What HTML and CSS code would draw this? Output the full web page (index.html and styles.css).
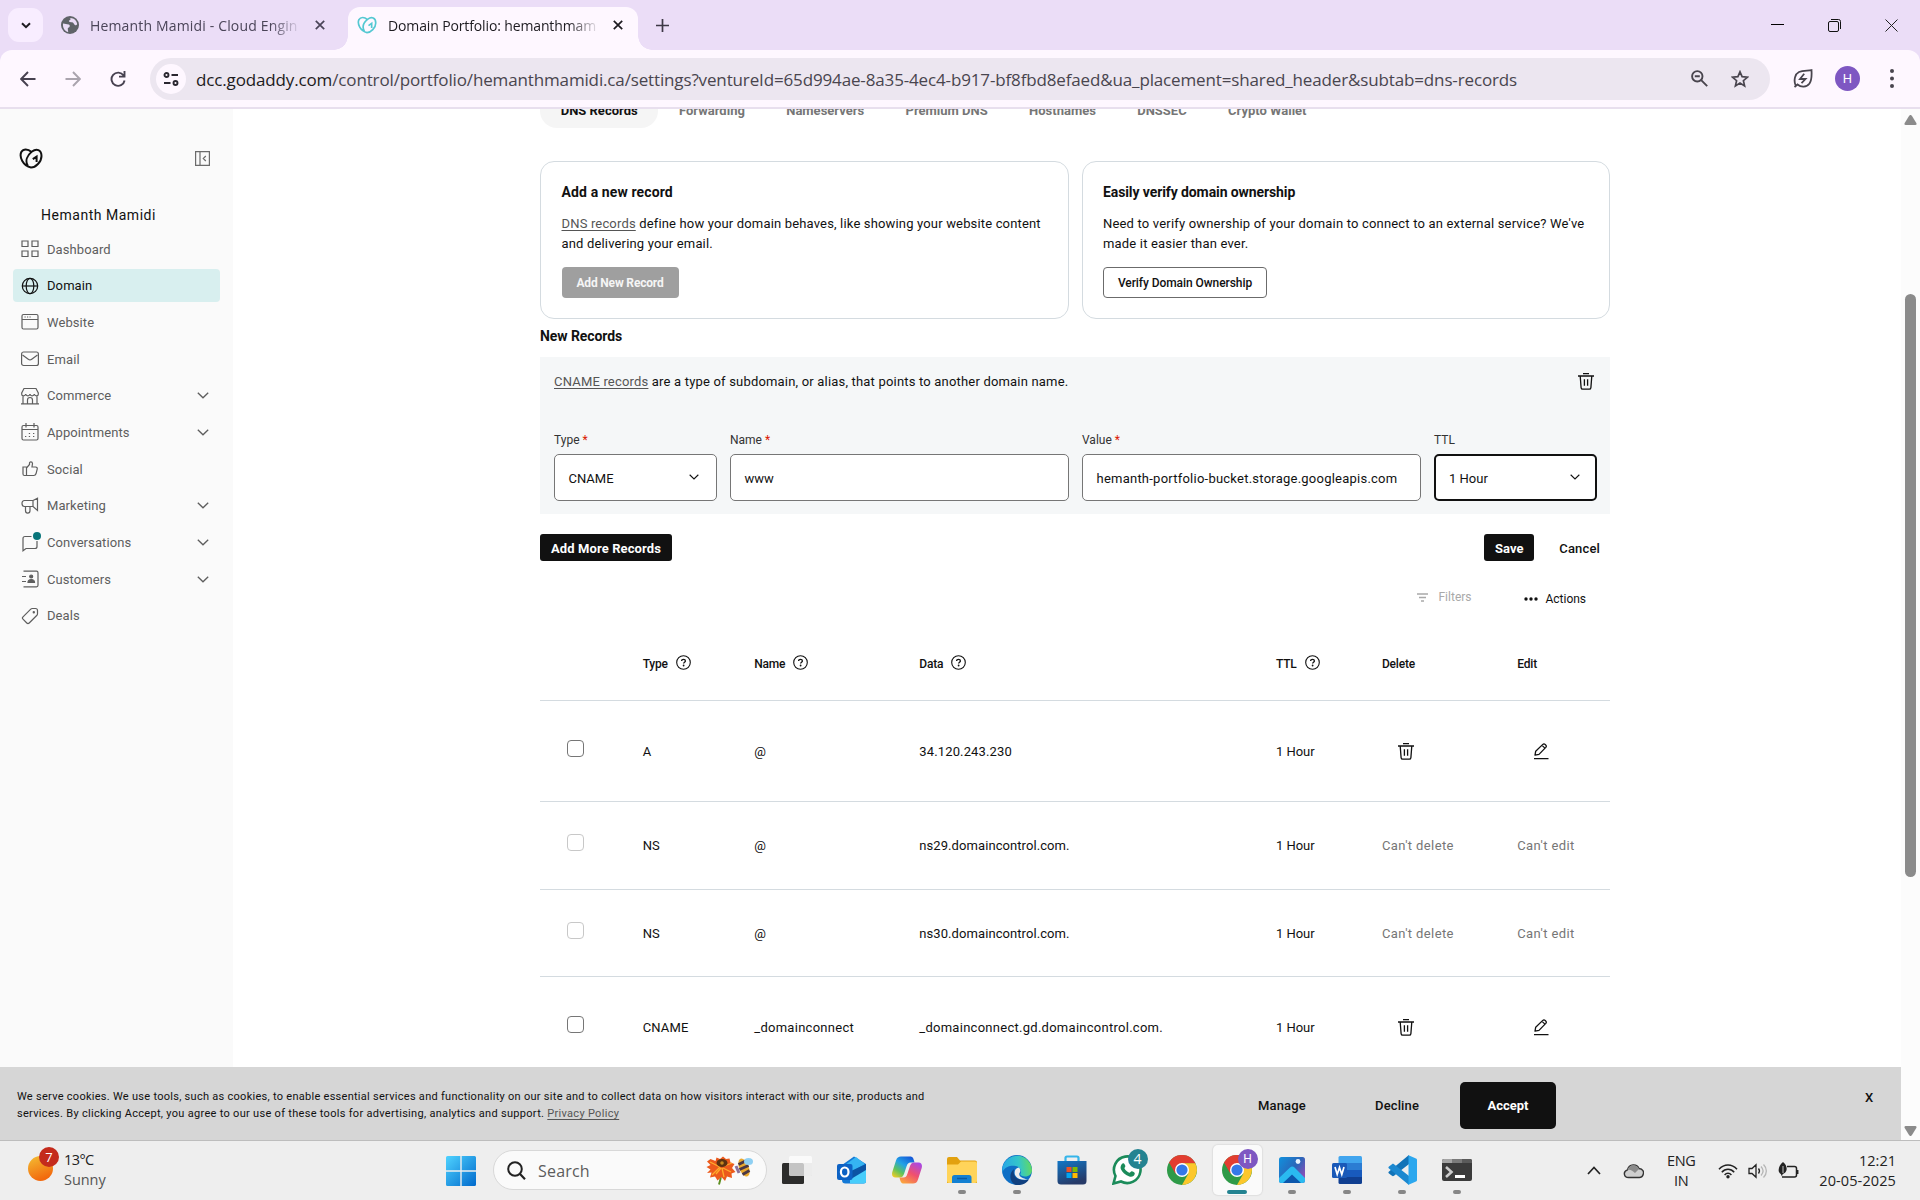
FILE: index.html
```
<!DOCTYPE html>
<html lang="en">
<head>
<meta charset="utf-8">
<title>Domain Portfolio: hemanthmamidi.ca</title>
<link rel="stylesheet" href="styles.css">
</head>
<body>
<!-- shared symbols -->
<svg class="defs" aria-hidden="true">
  <symbol id="chev" viewBox="0 0 12 7"><path d="M.8.8 6 5.8 11.2.8" fill="none" stroke="currentColor" stroke-width="1.3"/></symbol>
  <symbol id="help" viewBox="0 0 15 15"><circle cx="7.5" cy="7.5" r="6.8" fill="none" stroke="currentColor" stroke-width="1.1"/><path d="M5.6 6.1c0-1.1.8-1.8 1.9-1.8s1.9.7 1.9 1.6c0 1.3-1.8 1.3-1.8 2.6" fill="none" stroke="currentColor" stroke-width="1.3"/><circle cx="7.6" cy="10.5" r=".9" fill="currentColor"/></symbol>
  <symbol id="trash" viewBox="0 0 16 17"><path d="M0 3h16M5 .7h6M2.2 3l.9 11.6c.1 1 .7 1.6 1.6 1.6h6.6c.9 0 1.5-.6 1.6-1.6L13.800 3M6.400 6.200v6.600M9.600 6.200v6.600" fill="none" stroke="currentColor" stroke-width="1.3"/></symbol>
  <symbol id="pencil" viewBox="0 0 16 17"><path d="M1 15.700h14.500M2 12.200l.7-4L9.800 1.400c1.500-1.300 4.600 1 3 3L6 11.400zM9 2.400l3.200 3" fill="none" stroke="currentColor" stroke-width="1.3" stroke-linejoin="round"/></symbol>
  <symbol id="go" viewBox="0 0 24 21"><path d="M12.200 3.800C9 .7 4.300.6 2.300 4 0 9 4 18 12 19.600 16.500 19.600 22.500 14 22.500 8 22.500 1.800 17.500 0 13 3.500 8 7.500 6 13 8.800 17.800M17.600 14V8.600l-3.800 2.600" fill="none" stroke="currentColor" stroke-width="2"/></symbol>
  <symbol id="x" viewBox="0 0 10 10"><path d="M.8.8l8.400 8.400M9.200.8.8 9.200" fill="none" stroke="currentColor" stroke-width="1.700"/></symbol>
  <symbol id="chromelogo" viewBox="0 0 30 30"><circle cx="15" cy="15" r="15" fill="#2e9a47"/><path d="M2 7.500A15 15 0 0 1 28 7.500L28.500 8.500H15L8.500 18.800z" fill="#e23d30"/><path d="M28.300 8.200A15 15 0 0 1 15 30l6.300-11.200L15 8.200z" fill="#fcc72b"/><circle cx="15" cy="15" r="7" fill="#fff"/><circle cx="15" cy="15" r="5.600" fill="#3478e8"/></symbol>
</svg>

<header class="browser">
  <div class="tabstrip">
    <div class="tabsearch"><svg width="10" height="7" viewBox="0 0 10 7"><path d="M1 1.200l4 4 4-4" fill="none" stroke="#1d1b20" stroke-width="2"/></svg></div>
    <div class="tab">
      <svg class="fav" width="18" height="18" viewBox="0 0 18 18"><circle cx="9" cy="9" r="9" fill="#5f6368"/><path d="M2 7.500c2.500 0 3.500 1 5.500 1 1.500 0 1.800 2.500.3 3-1.800.5-.6 2.300-.6 4.400C4 15.600 1.500 12 2 7.500zM8.500 2c2 .3 1 2-.3 2.500-1.200.6.500 2.200 2.800 1.700 1.600-.3 2.200 3 3.300 3 1 0 1.600-.5 1.900-1C15.800 4.500 12.500 1.400 8.500 2z" fill="#ebddf7"/></svg>
      <span class="tabtext tabtext-a">Hemanth Mamidi - Cloud Engin</span>
      <svg class="tabx" width="10" height="10"><use href="#x"/></svg>
    </div>
    <div class="tab tab-active">
      <svg class="fav fav-go" width="20" height="18"><use href="#go"/></svg>
      <span class="tabtext">Domain Portfolio: hemanthmam</span>
      <svg class="tabx" width="10" height="10"><use href="#x"/></svg>
    </div>
    <svg class="plus" width="13" height="13" viewBox="0 0 13 13"><path d="M6.500 0v13M0 6.500h13" stroke="#3d3846" stroke-width="1.700"/></svg>
    <div class="winctl">
      <svg width="13" height="13" viewBox="0 0 13 13"><path d="M0 5.500h13" stroke="#000"/></svg>
      <svg width="13" height="13" viewBox="0 0 13 13"><g fill="none" stroke="#111"><rect x=".5" y="2.500" width="10" height="10" rx="1.500"/><path d="M3 .5h7.500a2 2 0 0 1 2 2V10"/></g></svg>
      <svg width="13" height="13" viewBox="0 0 13 13"><path d="M.5.500l12 12M12.500.500l-12 12" stroke="#222"/></svg>
    </div>
  </div>
  <div class="toolbar">
    <div class="nav">
      <svg width="16" height="16" viewBox="0 0 16 16"><path d="M15.500 8H1.500M8 1 1.200 8 8 15" fill="none" stroke="#474150" stroke-width="1.900"/></svg>
      <svg width="16" height="16" viewBox="0 0 16 16"><path d="M.5 8h14M8 1l6.800 7L8 15" fill="none" stroke="#aaa4ae" stroke-width="1.900"/></svg>
      <svg width="16" height="16" viewBox="0 0 16 16"><path d="M13.600 4.500A6.600 6.600 0 1 0 14.600 9.500M14.500 0v5.600H9" fill="none" stroke="#474150" stroke-width="1.900"/></svg>
    </div>
    <div class="omnibox">
      <span class="site"><svg width="16" height="14" viewBox="0 0 16 14"><g fill="none" stroke="#2a2730" stroke-width="1.900"><circle cx="3.500" cy="3" r="2"/><path d="M8.500 3H15M1 11h6.500"/><circle cx="12.500" cy="11" r="2"/></g></svg></span>
      <span class="url"><b>dcc.godaddy.com</b>/control/portfolio/hemanthmamidi.ca/settings?ventureId=65d994ae-8a35-4ec4-b917-bf8fbd8efaed&amp;ua_placement=shared_header&amp;subtab=dns-records</span>
      <svg class="mag" width="17" height="17" viewBox="0 0 17 17"><g fill="none" stroke="#49454e" stroke-width="1.900"><circle cx="6.300" cy="6.300" r="5.200"/><path d="M10.200 10.200l6 6M3.800 6.300h5"/></g></svg>
      <svg class="star" width="18" height="18" viewBox="0 0 18 18"><path d="M9 1.800l2.100 4.900 5.300.5-4 3.500 1.200 5.200L9 13.100l-4.600 2.800 1.200-5.200-4-3.500 5.300-.5z" fill="none" stroke="#49454e" stroke-width="1.700"/></svg>
    </div>
    <svg class="leaf" width="20" height="19" viewBox="0 0 20 19"><path d="M2.500 16C.5 11 2 5 6 3c4-1.800 9-1 12.500-1.800C18.800 6 19 11 16.500 14.500c-3 4-8.500 4-12 1L1.500 18M11.200 4.800 7 10h5.500l-4 4.200" fill="none" stroke="#49454e" stroke-width="1.800"/></svg>
    <span class="avatar">H</span>
    <svg class="dots" width="4" height="19" viewBox="0 0 4 19"><g fill="#49454e"><circle cx="2" cy="2" r="2"/><circle cx="2" cy="9.500" r="2"/><circle cx="2" cy="17" r="2"/></g></svg>
  </div>
</header>

<div class="window">
  <div class="viewport">
    <div class="app">
      <nav class="side">
        <div class="side-top">
          <svg width="24" height="21"><use href="#go"/></svg>
          <svg width="15" height="15" viewBox="0 0 15 15"><path d="M.6.600h13.800v13.800H.6zM5 .6v13.800M10.800 5 8.300 7.500l2.500 2.500" fill="none" stroke="#6b6b6b" stroke-width="1.200"/></svg>
        </div>
        <div class="side-name">Hemanth Mamidi</div>
        <ul class="menu">
          <li><svg class="ic" viewBox="0 0 18 18"><path d="M1 1h6v5.500H1zM11 1h6v5.500h-6zM1 11h6v5.500H1zM11 11h6v5.500h-6z"/></svg>Dashboard</li>
          <li class="on"><svg class="ic" viewBox="0 0 18 18"><circle cx="9" cy="9" r="7.700"/><ellipse cx="9" cy="9" rx="3.800" ry="7.700"/><path d="M1.300 9h15.400"/></svg>Domain</li>
          <li><svg class="ic" viewBox="0 0 18 18"><rect x="1" y="1.500" width="16" height="14.500" rx="1.500"/><path d="M1 6.500h16M3.500 4h1.200M6 4h1.200M8.500 4h1.200"/></svg>Website</li>
          <li><svg class="ic" viewBox="0 0 18 18"><rect x=".6" y="2" width="16.800" height="13.500" rx="2"/><path d="M1.500 5l5.800 4.200c1 .8 2.400.8 3.400 0L16.500 5"/></svg>Email</li>
          <li><svg class="ic" viewBox="0 0 18 18"><path d="M0 16.800h18M2 8.500v8.300M16 8.500v8.300M6.500 16.500v-3.500a2.500 2.500 0 0 1 5 0v3.500M3 1.500h12l2.300 4.500v1.200c0 2.200-3.500 2.200-4 0-.6 2.200-3.800 2.200-4.300 0-.5 2.200-3.700 2.200-4.300 0-.5 2.200-4 2.200-4 0V6z"/></svg>Commerce<svg class="cv"><use href="#chev"/></svg></li>
          <li><svg class="ic" viewBox="0 0 18 18"><rect x="1" y="2.500" width="16" height="14.500" rx="1.500"/><path d="M1 6.500h16M5 0v4.500M13 0v4.500M7.800 10.500h1.300M12 10.500h1.300M4 13.500h1.300M7.800 13.500h1.300M12 13.500h1.300" /></svg>Appointments<svg class="cv"><use href="#chev"/></svg></li>
          <li><svg class="ic" viewBox="0 0 18 18"><path d="M2 7h3.500v8.500H3.500c-1 0-1.500-.6-1.500-1.500zM5.500 8l3-3.500V3c0-1.500 2.800-1.500 3 .5l-.5 3.500h3.500c1.500 0 2 1 1.700 2.200l-1.200 4.600c-.4 1.200-1.200 1.700-2.200 1.700H5.500"/></svg>Social</li>
          <li><svg class="ic" viewBox="0 0 18 18"><path d="M12 3.500H3.500C1.800 3.500 1 4.700 1 6.500s.8 3 2.500 3H12M12 3.500l4.500-2.300v12.300L12 9.500zM4.500 9.500v4c0 3.500 4.500 3.500 4.500 0v-4"/></svg>Marketing<svg class="cv"><use href="#chev"/></svg></li>
          <li><span class="icwrap"><svg class="ic" viewBox="0 0 18 18"><path d="M10.500 2.500H4c-1.200 0-2 .8-2 2v12.200L5 14.500h9c1.200 0 2-.8 2-2V7"/></svg><i class="badge"></i></span>Conversations<svg class="cv"><use href="#chev"/></svg></li>
          <li><svg class="ic" viewBox="0 0 18 18"><path d="M2.500 1.200h13c1 0 1.500.6 1.500 1.500v12.600c0 .9-.5 1.500-1.500 1.500h-13M1 6.500h4M1 11.500h4"/><path d="M7 12.500c0-4 6.500-4 6.500 0z" fill="currentColor"/><circle cx="10.200" cy="6.500" r="1.500" fill="currentColor"/></svg>Customers<svg class="cv"><use href="#chev"/></svg></li>
          <li><svg class="ic" viewBox="0 0 18 18"><path d="M9.500 2.300c.6-.6 1-.8 1.800-.8H14.500c1.200 0 2 .8 2 2v3.200c0 .8-.2 1.200-.8 1.800l-7.500 7.500c-.8.800-1.600.8-2.400 0L2 12.200c-.8-.8-.8-1.600 0-2.400z"/><circle cx="12.800" cy="5.300" r=".6"/></svg>Deals</li>
        </ul>
      </nav>

      <main class="content">
        <div class="subtabs"><span class="sel">DNS Records</span><span>Forwarding</span><span>Nameservers</span><span>Premium DNS</span><span>Hostnames</span><span>DNSSEC</span><span>Crypto Wallet</span></div>
        <div class="cards">
          <section class="card">
            <h3 class="anr">Add a new record</h3>
            <p><a>DNS records</a> define how your domain behaves, like showing your website content<br>and delivering your email.</p>
            <button class="btn-off">Add New Record</button>
          </section>
          <section class="card">
            <h3>Easily verify domain ownership</h3>
            <p class="need">Need to verify ownership of your domain to connect to an external service? We've<br>made it easier than ever.</p>
            <button class="btn-line">Verify Domain Ownership</button>
          </section>
        </div>
        <h2>New Records</h2>
        <section class="panel">
          <div class="panel-top"><p><a>CNAME records</a> are a type of subdomain, or alias, that points to another domain name.</p><svg width="16" height="17"><use href="#trash"/></svg></div>
          <div class="fields">
            <div><label>Type <em>*</em></label><div class="box">CNAME<svg width="10" height="6"><use href="#chev"/></svg></div></div>
            <div><label>Name <em>*</em></label><div class="box">www</div></div>
            <div><label>Value <em>*</em></label><div class="box val">hemanth-portfolio-bucket.storage.googleapis.com</div></div>
            <div><label>TTL</label><div class="box focus">1 Hour<svg width="10" height="6"><use href="#chev"/></svg></div></div>
          </div>
        </section>
        <div class="acts"><button class="btn-dark">Add More Records</button><span class="grow"></span><button class="btn-dark save">Save</button><span class="cancel">Cancel</span></div>
        <div class="tools">
          <span class="filters"><svg width="11" height="9" viewBox="0 0 11 9"><path d="M0 1h11M2 4.500h7M4 8h3" stroke="currentColor" stroke-width="1.400"/></svg>Filters</span>
          <span class="more"><svg width="14" height="4" viewBox="0 0 14 4"><g fill="#111"><circle cx="2" cy="2" r="1.700"/><circle cx="7" cy="2" r="1.700"/><circle cx="12" cy="2" r="1.700"/></g></svg>Actions</span>
        </div>
        <div class="table">
          <div class="row head"><span></span><span>Type<svg width="15" height="15"><use href="#help"/></svg></span><span>Name<svg width="15" height="15"><use href="#help"/></svg></span><span>Data<svg width="15" height="15"><use href="#help"/></svg></span><span>TTL<svg width="15" height="15"><use href="#help"/></svg></span><span>Delete</span><span>Edit</span></div>
          <div class="row tall"><i class="check"></i><span>A</span><span>@</span><span>34.120.243.230</span><span class="hr">1 Hour</span><svg class="act" width="16" height="17"><use href="#trash"/></svg><svg class="act" width="16" height="17"><use href="#pencil"/></svg></div>
          <div class="row"><i class="check dim"></i><span>NS</span><span>@</span><span class="ns">ns29.domaincontrol.com.</span><span class="hr">1 Hour</span><span class="no">Can't delete</span><span class="no">Can't edit</span></div>
          <div class="row short"><i class="check dim"></i><span>NS</span><span>@</span><span class="ns">ns30.domaincontrol.com.</span><span class="hr">1 Hour</span><span class="no">Can't delete</span><span class="no">Can't edit</span></div>
          <div class="row tall"><i class="check"></i><span>CNAME</span><span class="dc">_domainconnect</span><span class="dc">_domainconnect.gd.domaincontrol.com.</span><span class="hr">1 Hour</span><svg class="act" width="16" height="17"><use href="#trash"/></svg><svg class="act" width="16" height="17"><use href="#pencil"/></svg></div>
        </div>
      </main>
    </div>

    <div class="cookie">
      <p>We serve cookies. We use tools, such as cookies, to enable essential services and functionality on our site and to collect data on how visitors interact with our site, products and<br><span class="l2">services. By clicking Accept, you agree to our use of these tools for advertising, analytics and support. <a>Privacy Policy</a></span></p>
      <span class="manage">Manage</span><span class="decline">Decline</span><button class="accept">Accept</button><span class="cx">X</span>
    </div>
  </div>
  <div class="scroll">
    <svg width="13" height="10" viewBox="0 0 13 10"><path d="M6.500 0c.8 0 1.300.7 1.800 1.500l4 6.500c.6 1 .2 2-1 2H1.700c-1.200 0-1.600-1-1-2l4-6.500C5.200.7 5.700 0 6.500 0z" fill="#8b8b8b"/></svg>
    <div class="thumb"></div>
    <svg width="13" height="10" viewBox="0 0 13 10"><path d="M6.500 10c.8 0 1.300-.7 1.800-1.500l4-6.500c.6-1 .2-2-1-2H1.700C.5 0 .1 1 .7 2l4 6.500c.5.800 1 1.500 1.800 1.500z" fill="#8b8b8b"/></svg>
  </div>
</div>

<footer class="taskbar">
  <div class="weather">
    <span class="sun"><svg width="25" height="25" viewBox="0 0 25 25"><defs><linearGradient id="sg" x1="0" y1="0" x2=".4" y2="1"><stop offset="0" stop-color="#f3bf34"/><stop offset="1" stop-color="#f2690d"/></linearGradient></defs><circle cx="12.500" cy="12.500" r="12.500" fill="url(#sg)"/></svg><b>7</b></span>
    <span class="wtext">13°C<br><i>Sunny</i></span>
  </div>
  <svg class="start" width="30" height="30" viewBox="0 0 30 30"><defs><linearGradient id="wg" x1="0" y1="0" x2="1" y2="1"><stop offset="0" stop-color="#4fd3ff"/><stop offset="1" stop-color="#0069cc"/></linearGradient></defs><path d="M0 1.500A1.500 1.500 0 0 1 1.500 0H14.300v14.300H0zM15.700 0h12.800A1.500 1.500 0 0 1 30 1.500v12.800H15.700zM0 15.700h14.300V30H1.500A1.500 1.500 0 0 1 0 28.500zM15.700 15.700H30v12.800a1.500 1.500 0 0 1-1.500 1.500H15.700z" fill="url(#wg)"/></svg>
  <div class="search">
    <svg width="19" height="19" viewBox="0 0 19 19"><circle cx="8" cy="8" r="6.800" fill="none" stroke="#222" stroke-width="2"/><path d="M12.800 12.800l5.200 5.400" stroke="#222" stroke-width="2.200"/></svg>
    <span>Search</span>
    <svg class="bug" width="48" height="30" viewBox="0 0 48 30"><path d="M15 18q0 6-2 11.500" stroke="#5d8f22" stroke-width="2" fill="none"/><path d="M1 6.500 4.500 4l5 2 1-3.500L14 4l3-2.500 3 2.500 3.500-.5 1 4 4 1.500-2.500 4 3.500 4-4 1.500.5 4.500-5-1.500-2 4.500-3.500-4-4 3.500-2.500-4-5 1 1.500-5L1 18l3.500-3.500L.5 12l4-2z" fill="#ec5a1c"/><path d="M4 7l10 5M6 20l8-8M18 22l-2-9M25 17l-8-4M26 8l-8 3M10 19l5-6" stroke="#ffab2c" stroke-width="1.300"/><ellipse cx="16" cy="8" rx="5.500" ry="4" fill="#5c3211"/><circle cx="16" cy="8" r="1.800" fill="#c98a1d"/><ellipse cx="38" cy="12.500" rx="4.800" ry="9.500" transform="rotate(-22 38 12.500)" fill="#e9a92e"/><path d="M32.500 9.500l8-4M33.500 14.500l9-4M36.500 19.500l7-4" stroke="#493846" stroke-width="3"/><ellipse cx="42.500" cy="6.500" rx="4.500" ry="3.500" fill="#8fd0f3"/><path d="M30 11l3 7" stroke="#8a719a" stroke-width="3"/></svg>
  </div>
  <div class="apps">
    <span class="app-i"><svg width="30" height="30" viewBox="0 0 30 30"><rect y="8" width="22" height="21" rx="1.500" fill="#2c2c2b"/><rect x="7" y="1" width="23" height="20" rx="1.500" fill="#fff" fill-opacity=".72"/><path d="M22 8h8v13h-8z" fill="#d8d8d8" opacity=".4"/></svg></span>
    <span class="app-i"><svg width="30" height="30" viewBox="0 0 30 30"><path d="M5 10 17 1.500 29 9v17a2.500 2.500 0 0 1-2.500 2.500h-18A3.500 3.500 0 0 1 5 25z" fill="#1479d6"/><path d="M8 10 19 2l9 7-14 8z" fill="#35b4f2"/><path d="M29 10 13 19v9.500h13.500A2.500 2.500 0 0 0 29 26z" fill="#47cdfb"/><path d="M29 9v6L14 24v-8z" fill="#0b54a4"/><rect y="9" width="15.500" height="16" rx="2" fill="#0d62c4"/><ellipse cx="7.700" cy="17" rx="3.800" ry="4.500" fill="none" stroke="#fff" stroke-width="2.200"/></svg></span>
    <span class="app-i"><svg width="30" height="30" viewBox="0 0 30 30"><defs><linearGradient id="c1" x1=".8" y1="0" x2=".1" y2="1"><stop offset="0" stop-color="#1458d8"/><stop offset=".4" stop-color="#23a2e6"/><stop offset=".7" stop-color="#5ec35c"/><stop offset="1" stop-color="#f4cb23"/></linearGradient><linearGradient id="c2" x1=".8" y1="0" x2=".2" y2="1"><stop offset="0" stop-color="#a948e4"/><stop offset=".5" stop-color="#f0506e"/><stop offset="1" stop-color="#fba53d"/></linearGradient></defs><path d="M9 1.500h9c3 0 3.500 2 4.500 6h-4c-2 0-3 1-4 4L12 19c-1 2.500-2 3.500-4.500 3.500H3.500C.5 22.500-.5 20 .3 17L4 5.500C5 2.500 6.500 1.500 9 1.500z" fill="url(#c1)"/><path d="M21 28.500h-9c-3 0-3.500-2-4.500-6h4c2 0 3-1 4-4L18 11c1-2.500 2-3.500 4.500-3.500h4c3 0 4 2.500 3.200 5.500L26 24.500c-1 3-2.500 4-5 4z" fill="url(#c2)"/></svg></span>
    <span class="app-i run"><svg width="30" height="30" viewBox="0 0 30 30"><path d="M0 4a2 2 0 0 1 2-2h8l3 3.500H28a2 2 0 0 1 2 2V28H0z" fill="#e2a10f"/><path d="M0 9.500h11l3-3h14a2 2 0 0 1 2 2V26a2 2 0 0 1-2 2H2a2 2 0 0 1-2-2z" fill="#ffd45a"/><path d="M5 28v-5.500a2.500 2.500 0 0 1 2.500-2.500H22a2.500 2.500 0 0 1 2.500 2.500V28z" fill="#1380d2"/><path d="M10 23.500h10" stroke="#0a5aa3" stroke-width="1.500"/></svg></span>
    <span class="app-i run"><svg width="30" height="30" viewBox="0 0 30 30"><defs><linearGradient id="e1" x1="0" y1=".3" x2="1" y2=".2"><stop offset="0" stop-color="#28a8e6"/><stop offset=".55" stop-color="#34c6c9"/><stop offset="1" stop-color="#66db57"/></linearGradient></defs><circle cx="15" cy="15" r="15" fill="#0f6fc5"/><path d="M.5 12A15 15 0 0 1 30 15c0 4-3 6.500-7 6.500-3 0-5.500-1-4.500-3 1.500-3.500-1-7-5-7.500C8 10.300 3 12 .3 17z" fill="url(#e1)"/><path d="M12 14c-2 8 5 13 15 10.500C24 29 19 30.500 14 30 8 28 6 19 12 14z" fill="#10407f"/><path d="M17.500 18c1.500-2 .8-4-.5-5.500-4 .5-5 4-4 7.500 2 4 8 6 14.500 4-1 1-12-1-10-6z" fill="#eee"/></svg></span>
    <span class="app-i"><svg width="30" height="30" viewBox="0 0 30 30"><defs><linearGradient id="st" x1="0" y1="0" x2=".4" y2="1"><stop offset="0" stop-color="#1277c6"/><stop offset="1" stop-color="#263a68"/></linearGradient></defs><path d="M8.500 7V3A1.500 1.500 0 0 1 10 1.500h10A1.500 1.500 0 0 1 21.500 3v4" fill="none" stroke="#35b5ea" stroke-width="2.200"/><path d="M.5 6h29v20a3.500 3.500 0 0 1-3.500 3.500H4A3.500 3.500 0 0 1 .5 26z" fill="url(#st)"/><path d="M9.500 12h5v5h-5z" fill="#f05023"/><path d="M15.500 12h5v5h-5z" fill="#80ba00"/><path d="M9.500 18h5v5h-5z" fill="#02a5ef"/><path d="M15.500 18h5v5h-5z" fill="#ffb902"/></svg></span>
    <span class="app-i"><svg width="30" height="30" viewBox="0 0 30 30"><path d="M1.500 28.500l2-7.500A13.300 13.300 0 1 1 9 26.500z" fill="#fff" stroke="#1b8b5a" stroke-width="2.600"/><path d="M10.500 8.500c1.500-1 2 .3 2.800 2.200.5 1.200-1.300 2-.8 2.800 1.200 2 2.800 3.400 4.800 4.200.9.300 1.600-1.700 2.500-1.500 1 .3 3.200 1 3 2.300-.4 3-3.200 3.600-5.500 2.900-4.700-1.500-7-4.200-8.500-7.400-.7-1.900.2-4.300 1.700-5.500z" fill="#1b8b5a"/></svg><b class="cnt">4</b></span>
    <span class="app-i"><svg width="30" height="30"><use href="#chromelogo"/></svg></span>
    <span class="app-i cur"><svg width="30" height="30"><use href="#chromelogo"/></svg><b class="cnt prof">H</b></span>
    <span class="app-i run"><svg width="30" height="30" viewBox="0 0 30 30"><defs><linearGradient id="ph" x1="0" y1="0" x2="1" y2=".7"><stop offset="0" stop-color="#1191dd"/><stop offset=".6" stop-color="#2b65b8"/><stop offset="1" stop-color="#8d4eb8"/></linearGradient></defs><rect x="2" y="2" width="26" height="26" rx="2.500" fill="url(#ph)"/><path d="M2 23 13 12.500c1.500-1.500 3-1.500 4.500 0L28 23v2.500a2.500 2.500 0 0 1-2.500 2.500h-21A2.500 2.500 0 0 1 2 25.500z" fill="#2abaf0"/><path d="M6 28l9-8.500 9 8.500z" fill="#0d57ac"/><circle cx="21" cy="6.500" r="2.400" fill="#e8f4ff"/></svg></span>
    <span class="app-i run"><svg width="30" height="30" viewBox="0 0 30 30"><path d="M6.500 2.500A1.500 1.500 0 0 1 8 1h20.500A1.500 1.500 0 0 1 30 2.500V8H6.500z" fill="#41a5ee"/><path d="M6.500 8H30v7H6.500z" fill="#2b7cd3"/><path d="M6.500 15H30v7H6.500z" fill="#185abd"/><path d="M6.500 22H30v5.500a1.500 1.500 0 0 1-1.500 1.500H8a1.500 1.500 0 0 1-1.500-1.500z" fill="#103f91"/><rect y="8" width="15" height="15" rx="1.500" fill="#1a59b8"/><path d="M3 12l2.200 7.500L7.500 12.500l2.300 7L12 12" fill="none" stroke="#fff" stroke-width="1.700"/></svg></span>
    <span class="app-i run"><svg width="30" height="30" viewBox="0 0 30 30"><path d="M22 0v9L7 20.800c-.8.5-1.400.5-2 0l-3-2.300c-.8-.7-.8-1.200 0-2L21 .8z" fill="#1173b8"/><path d="M22 30v-9L7 9.200c-.8-.5-1.400-.5-2 0l-3 2.300c-.8.7-.8 1.200 0 2L21 29.200z" fill="#1b88d0"/><path d="M21.500.2 29 3.500c.7.300 1 .8 1 1.500v20c0 .7-.3 1.200-1 1.500l-7.500 3.300z" fill="#2ba7ee"/></svg></span>
    <span class="app-i run"><svg width="30" height="30" viewBox="0 0 30 30"><rect y="4" width="30" height="22" rx="2" fill="#3b3b3b"/><path d="M0 8V6a2 2 0 0 1 2-2h8v4z" fill="#a5a5a5"/><path d="M10 4h10v4H10z" fill="#7a7a7a"/><path d="M20 4h8a2 2 0 0 1 2 2v2H20z" fill="#5a5a5a"/><path d="M4 12l5.500 5L4 22" fill="none" stroke="#ccc" stroke-width="2.600"/><path d="M13 21.500h10" stroke="#fff" stroke-width="3"/></svg></span>
  </div>
  <div class="tray">
    <svg width="14" height="9" viewBox="0 0 14 9"><path d="M1 8l6-6.500L13 8" fill="none" stroke="#222" stroke-width="1.700"/></svg>
    <svg class="cloud" width="21" height="16" viewBox="0 0 21 16"><path d="M5.500 14.500C1 14.500-.5 8.500 4.500 6.800 6 .5 14 .5 16 5.500c4 .3 5 3.500 4.300 5.500-.5 2.200-2 3.500-4 3.500z" fill="#cfcfcf" stroke="#333" stroke-width="1.400"/><path d="M4.500 7C7 6 9.500 7.500 12 10l4-4c-2-5-9.500-5-11.500 1z" fill="#8b8b8b"/></svg>
    <span class="lang">ENG<br>IN</span>
    <svg class="wifi" width="20" height="16" viewBox="0 0 20 16"><g fill="none" stroke="#222" stroke-width="1.500"><path d="M1 6.200c5-5.700 13-5.700 18 0M3.800 9.200c3.500-4 8.900-4 12.400 0M6.600 12c2-2.200 4.800-2.200 6.800 0"/></g><circle cx="10" cy="13.800" r="1.700" fill="#222"/></svg>
    <svg class="vol" width="20" height="16" viewBox="0 0 20 16"><path d="M1 5.500h3l4-3.800v12.600l-4-3.800H1zM10.500 5.500c1.200 1.500 1.200 3.500 0 5" fill="none" stroke="#222" stroke-width="1.300"/><path d="M13 3.500c2.500 2.700 2.500 6.300 0 9M15.500 1.500c3.800 3.800 3.800 9.200 0 13" fill="none" stroke="#b5b5b5" stroke-width="1.300"/></svg>
    <svg class="bat" width="21" height="18" viewBox="0 0 21 18"><path d="M9 4.500h7.500a2 2 0 0 1 2 2v6.500a2 2 0 0 1-2 2H4M19.700 8v4" fill="none" stroke="#222" stroke-width="1.500"/><path d="M5 0c4.500 3 5 10 .8 11.500-1.300.4-1.600 1.500-1.800 3L2.800 12C-1 10 .5 3.500 5 0z" fill="#222"/><path d="M5 4v7" stroke="#eee" stroke-width=".8"/></svg>
    <span class="clock">12:21<br><i>20-05-2025</i></span>
  </div>
</footer>
</body>
</html>
```
FILE: styles.css
```
* { box-sizing: border-box; }
body { margin: 0; width: 1920px; height: 1200px; overflow: hidden; display: flex; flex-direction: column; background: #fff; color: #111; font: 13px Roboto, "Liberation Sans", sans-serif; }
h2, h3, p, ul { margin: 0; padding: 0; font-weight: inherit; font-size: inherit; }
i, em { font-style: normal; }
svg { display: block; flex: none; }
button { border: 0; padding: 0; font: inherit; display: flex; align-items: center; justify-content: center; }
.defs { width: 0; height: 0; position: absolute; }

/* browser frame */
.browser { height: 109px; flex: none; background: #ebddf7; font-family: "Open Sans", "Noto Sans", sans-serif; }
.tabstrip { height: 50px; display: flex; align-items: center; padding-left: 8px; }
.tabsearch { width: 35px; height: 34px; border-radius: 11px; background: #f8edff; display: flex; align-items: center; justify-content: center; }
.tab { height: 43px; align-self: flex-end; display: flex; align-items: center; width: 290px; padding: 0 15px 7px 9px; font-size: 14px; color: #4a4458; }
.tab:not(.tab-active) { margin-left: 9px; width: 296px; padding-right: 23px; }
.tab-active { background: #fef7ff; border-radius: 12px 12px 0 0; color: #1d1b20; position: relative; }
.tab-active::before, .tab-active::after { content: ""; position: absolute; bottom: 0; width: 14px; height: 14px; }
.tab-active::before { left: -14px; background: radial-gradient(circle at 0 0, transparent 13.5px, #fef7ff 14px); }
.tab-active::after { right: -14px; background: radial-gradient(circle at 100% 0, transparent 13.5px, #fef7ff 14px); }
.fav { margin-right: 11px; }
.fav-go { color: #54c8d2; }
.tabtext { width: 212px; white-space: nowrap; letter-spacing: -0.13px; -webkit-mask-image: linear-gradient(90deg, #000 180px, transparent 212px); mask-image: linear-gradient(90deg, #000 180px, transparent 212px); }
.tabtext-a { letter-spacing: 0.16px; }
.tabx { margin-left: auto; }
.plus { margin-left: 18px; }
.winctl { margin-left: auto; display: flex; gap: 44px; padding-right: 22px; }
.toolbar { height: 59px; background: #fef7ff; border-radius: 12px 12px 0 0; border-bottom: 2px solid #e8dfee; display: flex; align-items: center; }
.nav { display: flex; gap: 29px; padding-left: 20px; width: 150px; }
.omnibox { width: 1620px; height: 42px; border-radius: 21px; background: #ece6f0; display: flex; align-items: center; padding-left: 6px; }
.site { width: 30px; height: 30px; border-radius: 50%; background: #fef7ff; display: flex; align-items: center; justify-content: center; }
.url { margin: 1px 0 0 10px; font-size: 17px; letter-spacing: -0.143px; color: #49454e; white-space: nowrap; }
.url b { font-weight: 400; color: #1d1b20; }
.mag { margin-left: auto; }
.star { margin: 0 21px 0 23px; }
.leaf { margin-left: 23px; }
.avatar { margin-left: 22px; width: 25px; height: 25px; border-radius: 50%; background: #7e57c2; color: #fff; font: 13px Roboto, sans-serif; display: flex; align-items: center; justify-content: center; }
.dots { margin-left: 30px; }

/* page */
.window { height: 1031px; flex: none; display: flex; }
.viewport { width: 1901px; display: flex; flex-direction: column; }
.scroll { width: 19px; background: #fcfcfc; display: flex; flex-direction: column; align-items: center; padding: 6px 0 4px; }
.thumb { width: 11px; height: 583px; border-radius: 6px; background: #8b8b8b; margin: 169px 0 auto; }
.app { height: 958px; overflow: hidden; display: flex; }

.side { width: 233px; background: #fafafa; flex: none; color: #5e5e5e; }
.side-top { display: flex; justify-content: space-between; align-items: center; height: 21px; margin-top: 39px; padding: 0 23px 0 19px; color: #111; }
.side-name { height: 20px; line-height: 20px; margin-top: 36px; padding-left: 41px; font-size: 14px; font-weight: 400; letter-spacing: 0.52px; color: #111; }
.menu { list-style: none; display: flex; flex-direction: column; gap: 3.7px; padding: 7.5px 13px 0; letter-spacing: 0.09px; }
.menu li { height: 33px; border-radius: 4px; display: flex; align-items: center; padding: 0 11px 0 8px; }
.menu .on { background: #d8efef; color: #111; }
.ic { width: 18px; height: 18px; margin-right: 8px; fill: none; stroke: currentColor; stroke-width: 1.2; }
.cv { width: 12px; height: 7px; margin-left: auto; }
.icwrap { position: relative; }
.badge { position: absolute; left: 12px; top: -2px; width: 8px; height: 8px; border-radius: 50%; background: #09757a; }

.content { width: 1070px; margin-left: 307px; flex: none; }
.subtabs { height: 34px; margin-top: -15px; display: flex; font-weight: 700; color: #767676; }
.subtabs span { padding: 0 20.7px 2px; display: flex; align-items: center; border-radius: 17px; height: 34px; }
.subtabs .sel { background: #f5f5f5; color: #111; }
.cards { display: flex; gap: 13px; margin-top: 33px; }
.card { flex: 1; height: 158px; border: 1px solid #d4dbe0; border-radius: 14px; padding: 20px 20px 0 20.5px; }
.card h3 { font-size: 14px; font-weight: 700; line-height: 21px; letter-spacing: -0.1px; }
.card .anr { letter-spacing: 0.12px; }
.card p { line-height: 20px; margin: 11px 0 13px; letter-spacing: 0.163px; white-space: nowrap; }
.card .need { letter-spacing: 0.182px; }
a { color: #555; text-decoration: underline; text-underline-offset: 2px; }
.btn-off, .btn-line { height: 31px; border-radius: 4px; font-size: 12px; padding-top: 1px; }
.btn-off { width: 117px; background: #9f9f9f; color: #f5f5f5; font-weight: 700; letter-spacing: -0.17px; }
.btn-line { width: 164px; background: #fff; border: 1px solid #6b6b6b; color: #111; font-weight: 500; letter-spacing: -0.07px; }
h2 { height: 38px; line-height: 35px; font-size: 14px; font-weight: 700; letter-spacing: -0.08px; }
.panel { height: 157px; background: #f5f7f8; padding: 10px 13px 0 14px; }
.panel-top { height: 28px; display: flex; justify-content: space-between; align-items: center; padding-right: 3px; letter-spacing: 0.185px; }
.fields { display: grid; grid-template-columns: 163px 339px 339px 163px; gap: 13px; margin-top: 37px; }
.fields label { display: block; height: 22px; line-height: 16px; font-size: 12px; color: #333; }
.fields em { color: #db1802; }
.box { height: 47px; border: 1px solid #767676; border-radius: 5px; background: #fff; display: flex; align-items: center; justify-content: space-between; padding: 2px 17px 0 13.5px; }
.box.focus { border: 2px solid #111; padding: 2px 15px 0 13px; }
.box svg { margin-bottom: 4px; }
.val { letter-spacing: 0.235px; }
.acts { display: flex; align-items: center; margin-top: 20px; height: 27px; font-weight: 500; }
.btn-dark { height: 27px; width: 132px; border-radius: 3px; background: #111; color: #fff; font-weight: 700; letter-spacing: 0.1px; padding-top: 2px; }
.save { width: 50px; }
.grow { flex: 1; }
.cancel { margin: 2px 10px 0 25px; letter-spacing: 0.15px; }
.tools { display: flex; justify-content: flex-end; height: 66px; font-size: 12px; }
.filters, .more { display: flex; align-items: center; gap: 10px; height: 20px; }
.filters { margin-top: 26px; color: #a9a9a9; }
.more { margin: 28px 24px 0 52px; gap: 8px; letter-spacing: -0.02px; }

.row { display: grid; grid-template-columns: 102.7px 111.6px 165px 356.7px 106px 135.3px 92.7px; align-items: center; height: 88px; border-bottom: 1px solid #d4dbe0; letter-spacing: 0.14px; }
.row.head { height: 74px; font-size: 12px; font-weight: 500; letter-spacing: -0.2px; }
.row.head span { display: flex; gap: 8px; align-items: center; }
.row.head svg { margin-bottom: 3px; }
.row.tall { height: 101px; }
.row.short { height: 87px; }
.check { width: 17px; height: 17px; margin: 0 0 6px 27px; border: 1px solid #767676; border-radius: 4px; }
.dim { border-color: #c8c8c8; }
.act { margin-left: 16px; }
.no { color: #767676; letter-spacing: 0.39px; }
.hr { letter-spacing: -0.04px; }
.ns { letter-spacing: 0.08px; }
.dc { letter-spacing: 0.27px; }

.cookie { height: 73px; background: #d6d6d6; display: flex; align-items: center; font-weight: 500; letter-spacing: 0.14px; }
.cookie p { width: 1241px; padding-left: 17px; margin-top: 3px; font-size: 11px; line-height: 17px; font-weight: 400; letter-spacing: 0.277px; }
.cookie .l2 { letter-spacing: 0.3px; }
.manage, .decline, .accept { margin-top: 3px; }
.manage { margin-left: 17px; width: 117px; }
.decline { width: 85px; }
.accept { width: 96px; height: 47px; border-radius: 5px; background: #111; color: #fff; font-weight: 700; }
.cx { margin: 0 0 12px 309px; }

/* taskbar */
.taskbar { height: 60px; background: #eee; border-top: 1px solid #bdbdbd; display: flex; font-family: "Open Sans", "Noto Sans", sans-serif; font-size: 14.5px; line-height: 20px; color: #222; }
.weather { width: 446px; display: flex; padding: 9px 0 0 28px; }
.sun { position: relative; padding-top: 6px; width: 36px; }
.sun b { position: absolute; left: 11px; top: -3px; width: 20px; height: 20px; border-radius: 50%; background: #c42b1c; color: #fff; font-size: 13px; font-weight: 400; text-align: center; }
.wtext { letter-spacing: -0.6px; }
.wtext i { color: #555; letter-spacing: -0.06px; }
.start { margin-top: 15px; }
.search { width: 274px; height: 40px; margin: 9px 0 0 17px; border-radius: 20px; background: #fafafa; border: 1px solid #d8d8d8; display: flex; align-items: center; padding: 0 12px 0 13px; }
.search span { margin: 2px 0 0 12px; font-size: 16px; letter-spacing: 0.2px; color: #5c5c5c; }
.bug { margin-left: auto; }
.apps { display: flex; margin-left: 3px; height: 59px; }
.app-i { width: 54.95px; height: 59px; display: flex; flex-direction: column; align-items: center; padding-top: 14px; position: relative; }
.run::after, .cur::after { content: ""; width: 8px; height: 4px; border-radius: 2px; background: #868686; margin-top: 5px; }
.cur { width: 49px; margin: 4px 3px 0; height: 50px; padding-top: 10px; border-radius: 5px; background: #fafafa; box-shadow: 0 0 1px 1px #dfdfdf; }
.cur::after { width: 20px; background: #248391; }
.cnt { position: absolute; left: 28px; top: 8px; width: 20px; height: 20px; border-radius: 50%; background: #248391; color: #fff; font-size: 14px; font-weight: 400; text-align: center; }
.prof { left: 25px; top: 4px; background: #7e57c2; font: 12px/20px Roboto, sans-serif; }
.tray { margin-left: auto; display: flex; align-items: center; padding-right: 24px; }
.cloud { margin-left: 22px; }
.lang { text-align: center; width: 34px; margin-left: 20px; letter-spacing: -0.3px; }
.wifi { margin-left: 20px; }
.vol { margin-left: 10px; }
.bat { margin-left: 10px; }
.clock { text-align: right; margin-left: 20px; letter-spacing: 0; }
.clock i { letter-spacing: 0.11px; }
```
